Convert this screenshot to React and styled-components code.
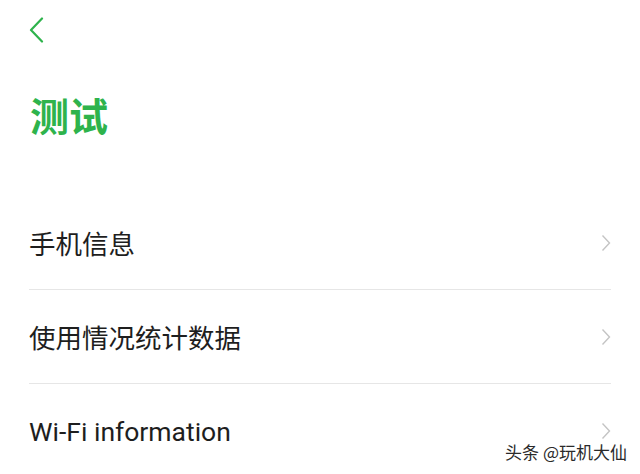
import React from "react";
import styled, { createGlobalStyle } from "styled-components";

const Global = createGlobalStyle`
  html, body { margin: 0; padding: 0; background: #fff; }
  body { font-family: Roboto, "Noto Sans CJK SC", sans-serif; }
`;

const Page = styled.div`
  position: relative;
  width: 640px;
  height: 474px;
  overflow: hidden;
  background: #fff;
  padding: 0 29px;
  box-sizing: border-box;
`;

const TopBar = styled.div`
  height: 62px;
  display: flex;
  align-items: flex-start;
  padding-top: 17px;
  box-sizing: border-box;
`;

const BackIcon = styled.svg`
  width: 16px;
  height: 26px;
  display: block;
`;

const Title = styled.h1`
  margin: 0;
  padding-top: 26px;
  padding-left: 1px;
  height: 134px;
  box-sizing: border-box;
  font-family: "Noto Sans CJK SC", sans-serif;
  font-weight: 700;
  font-size: 39px;
  line-height: 52px;
  color: #2eb34c;
`;

const List = styled.div`
  display: flex;
  flex-direction: column;
`;

const Row = styled.div`
  height: 94px;
  display: flex;
  align-items: center;
  justify-content: space-between;
  border-bottom: ${(p) => (p.$last ? "none" : "1px solid #e6e6e6")};
  box-sizing: border-box;
`;

const Label = styled.span`
  font-family: ${(p) => (p.$latin ? "Roboto, sans-serif" : '"Noto Sans CJK SC", sans-serif')};
  font-size: 26.5px;
  color: #1e1e1e;
  letter-spacing: 0;
`;

const Chevron = styled.svg`
  width: 10px;
  height: 18px;
  display: block;
`;

const Watermark = styled.div`
  position: absolute;
  right: 13px;
  bottom: 10px;
  font-family: "Noto Sans CJK SC", sans-serif;
  font-size: 17px;
  color: #2a2a2a;
  text-shadow: 0 0 2px #fff, 0 0 2px #fff, 0 0 3px #fff;
`;

const Arrow = () => (
  <Chevron viewBox="0 0 10 18">
    <path d="M1.5 1.5 L8.5 9 L1.5 16.5" fill="none" stroke="#c4c4c4" strokeWidth="1.4" />
  </Chevron>
);

const rows = [
  { label: "手机信息" },
  { label: "使用情况统计数据" },
  { label: "Wi-Fi information", latin: true },
];

export default function App() {
  return (
    <>
      <Global />
      <Page>
        <TopBar>
          <BackIcon viewBox="0 0 16 26">
            <path d="M13 1.5 L2 13 L13 24.5" fill="none" stroke="#2eb34c" strokeWidth="2.2" strokeLinecap="round" strokeLinejoin="round" />
          </BackIcon>
        </TopBar>
        <Title>测试</Title>
        <List>
          {rows.map((r, i) => (
            <Row key={r.label} $last={i === rows.length - 1}>
              <Label $latin={r.latin}>{r.label}</Label>
              <Arrow />
            </Row>
          ))}
        </List>
        <Watermark>头条 @玩机大仙</Watermark>
      </Page>
    </>
  );
}
